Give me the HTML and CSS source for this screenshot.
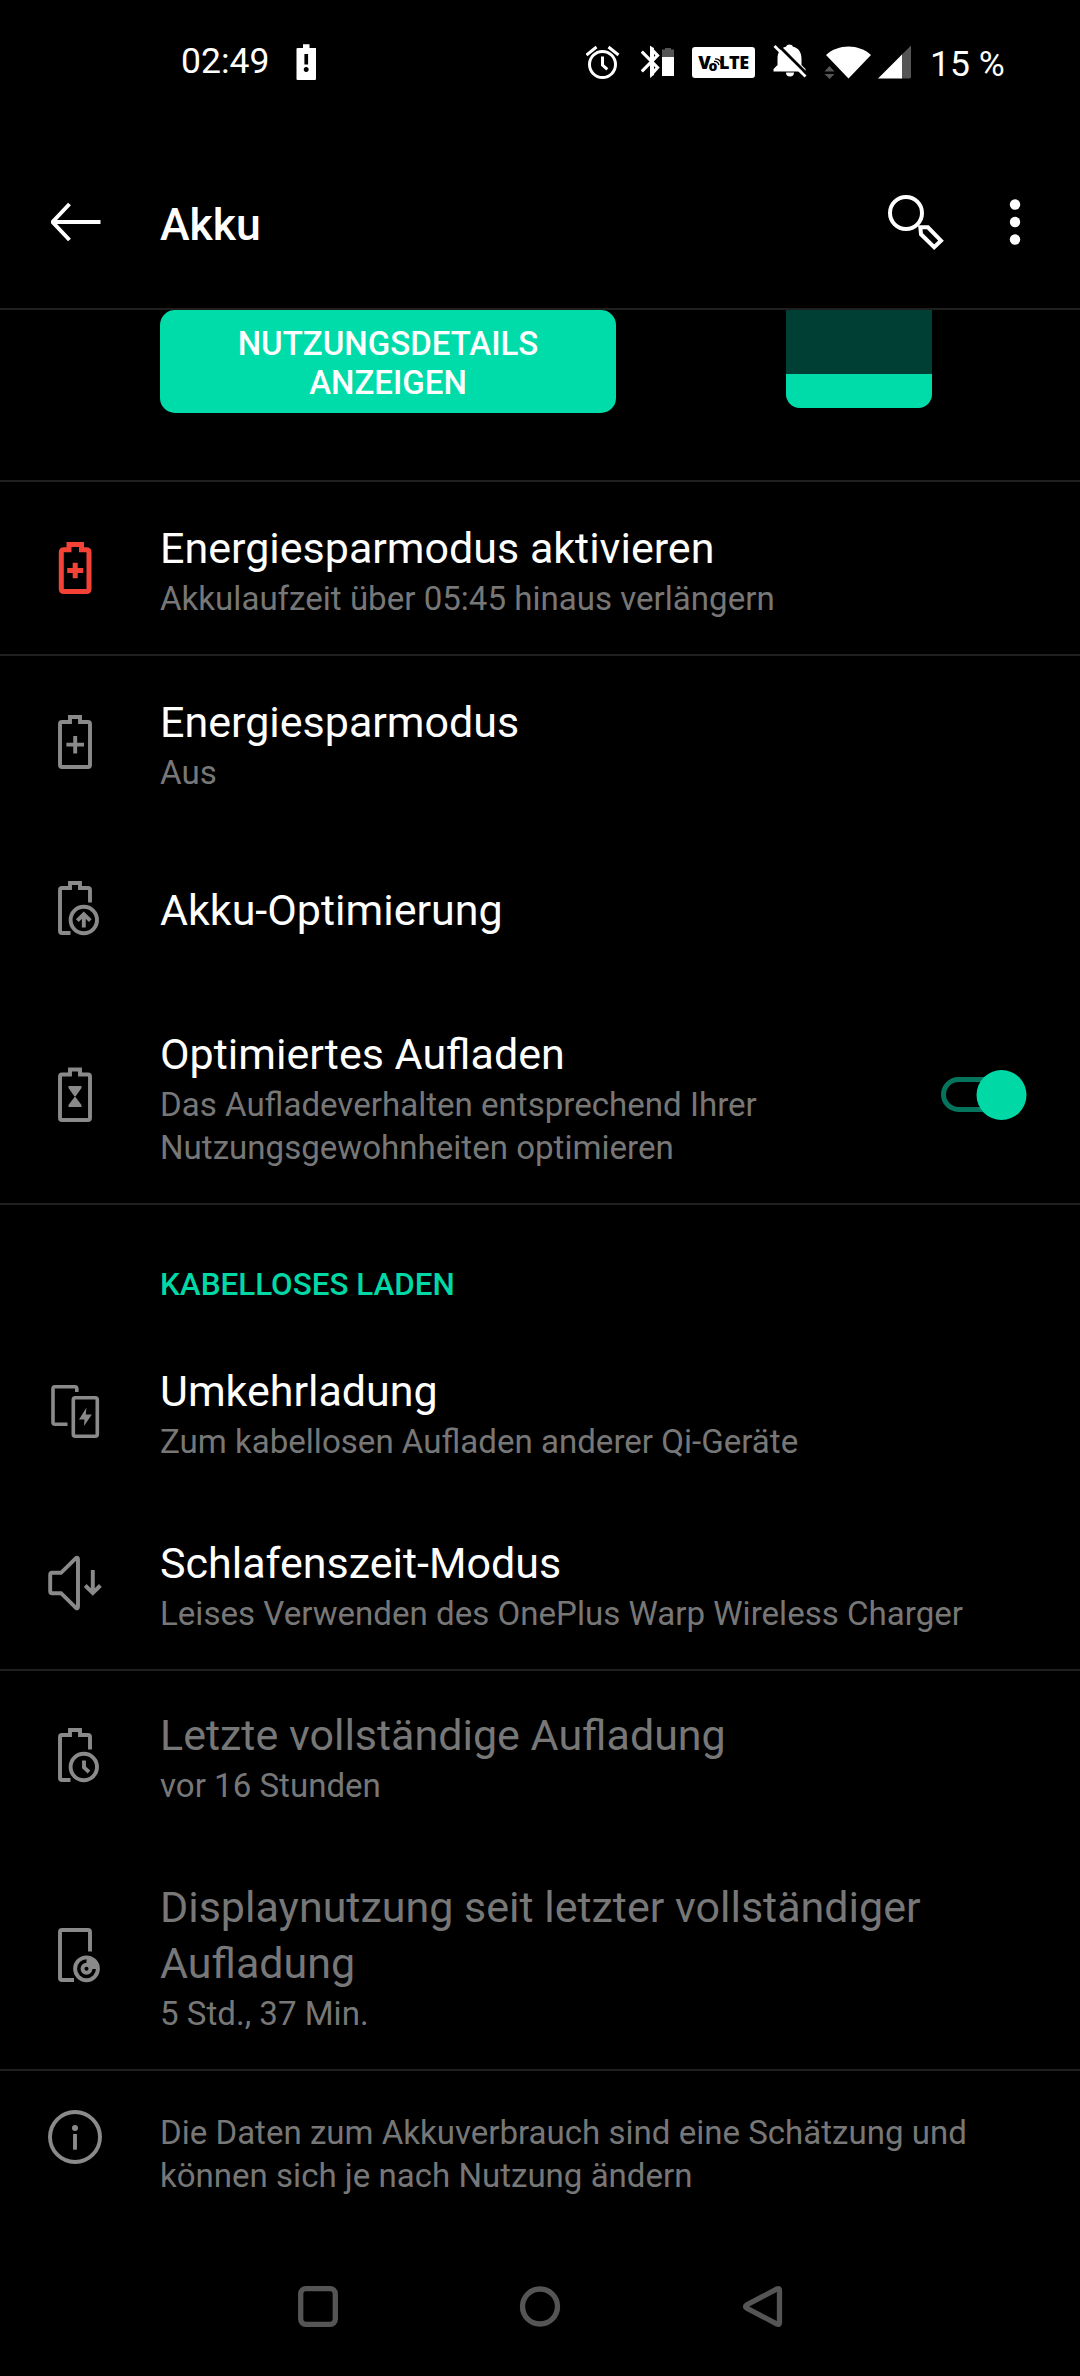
FILE: index.html
```
<!DOCTYPE html>
<html lang="de">
<head>
<meta charset="utf-8">
<title>Akku</title>
<link rel="stylesheet" href="styles.css">
</head>
<body>
<div class="screen">
  <header class="status">
    <span class="clock">02:49</span>
    <svg class="st-alert" width="20" height="44" viewBox="296 40 20 44"><path fill="#fff" fill-rule="evenodd" d="M303 44.3h6.5V48H316v31a1 1 0 0 1-1 1h-17.500a1 1 0 0 1-1-1V49a1 1 0 0 1 1-1H303ZM304.400 54v10.500h3.700V54ZM306.200 67a2.500 2.500 0 1 0 .01 0Z"/></svg>
    <div class="st-right">
      <svg width="34" height="44" viewBox="586 40 34 44" fill="none" stroke="#fff" stroke-width="3"><circle cx="602.500" cy="64.500" r="13"/><path d="M602.500 56.500V65l4.800 4.300M586.500 55l10-8M618.500 55l-10-8"/></svg>
      <svg class="st-bt" width="34" height="44" viewBox="641 40 34 44"><path fill="none" stroke="#fff" stroke-width="3.200" d="M641.800 51.500 657.500 67.500 651.800 74V49.500L657.500 55.500 641.800 71.500"/><path fill="#fff" d="M650 46l4 2v27l-4 2Z"/><path fill="#555" d="M662 57v-7.500h3V48h6v1.500h3V57Z"/><path fill="#fff" d="M662 57h12v19h-12Z"/></svg>
      <span class="volte"><span>V</span><span class="volte-o">o<svg width="9" height="9" viewBox="0 0 9 9" fill="none" stroke="#000" stroke-width="1.300"><path d="M1 3.500Q4.500 3 6 7M2 .8Q7 .8 8.300 5.200"/></svg></span><span>LTE</span></span>
      <svg class="st-bell" width="34" height="44" viewBox="773 40 34 44"><path fill="#fff" d="M773.500 71.500v-2.500l4-4V59c0-7 3-11 8.500-12.300 1-3 6-3 7 0 5.500 1.300 8.500 5.300 8.500 12.300v6l4 4v2.500ZM786 72.500h8a4 4 0 0 1-8 0Z"/><path stroke="#000" stroke-width="3" d="m777 44 30 30"/><path stroke="#fff" stroke-width="2.800" d="m774.500 46 31 30.500"/></svg>
      <svg class="st-wifi" width="47" height="44" viewBox="824 40 47 44"><path fill="#fff" d="M826 55c12-11.500 33-11.500 45 0l-22.500 23.500Z"/><path fill="#555" d="m824.500 71.500 5-5.500 5 5.500ZM824.500 74h10l-5 5Z"/></svg>
      <svg class="st-signal" width="33" height="44" viewBox="878 40 33 44"><path fill="#555" d="M911 45.500V77.500l-1 1H900V56.500Z"/><path fill="#fff" d="M902 54.500v24H878Z"/></svg>
      <span class="percent">15 %</span>
    </div>
  </header>

  <div class="appbar">
    <svg class="back" width="50" height="66" viewBox="51 189 50 66" fill="none" stroke="#fff" stroke-width="4"><path d="M53 222h47.500M69.500 204 52.500 222l17 18"/></svg>
    <h1>Akku</h1>
    <svg class="search" width="56" height="66" viewBox="888 189 56 66" fill="none" stroke="#fff" stroke-width="4"><circle cx="906" cy="213" r="16"/><path d="M920.300 227.300h7.600L941 240.700l-6.800 6.500L921 234.300Z"/></svg>
    <svg width="12" height="66" viewBox="1009 189 12 66" fill="#fff"><circle cx="1015" cy="204.500" r="5.200"/><circle cx="1015" cy="222" r="5.200"/><circle cx="1015" cy="239.500" r="5.200"/></svg>
  </div>

  <main>
    <section class="group summary">
      <button class="details" type="button">NUTZUNGSDETAILS ANZEIGEN</button>
      <div class="level"><div class="level-fill"></div></div>
    </section>

    <section class="group">
      <div class="row">
        <svg class="icon warn" viewBox="0 0 66 66"><path d="M27 14.700H22q-2.700 0-2.700 2.700V54q0 2.600 2.700 2.600H44.300q2.700 0 2.700-2.600V17.400q0-2.700-2.700-2.700H39.500V9.500H27ZM25.200 35.500H41.200M33.200 27.700v15.600"/></svg>
        <div class="text"><div class="title">Energiesparmodus aktivieren</div><div class="sub">Akkulaufzeit über 05:45 hinaus verlängern</div></div>
      </div>
    </section>

    <section class="group">
      <div class="row">
        <svg class="icon" viewBox="0 0 66 66"><path d="M28 13H20q-2 0-2 2V56q0 2 2 2H46q2 0 2-2V15q0-2-2-2H38V8H28ZM24.400 35.600H42M33.200 27v17.500"/></svg>
        <div class="text"><div class="title">Energiesparmodus</div><div class="sub">Aus</div></div>
      </div>
      <div class="row single">
        <svg class="icon" viewBox="0 0 66 66"><path d="M28.500 58H20q-2 0-2-2V15q0-2 2-2H28V8H38V13H46q2 0 2 2V27.500M41.800 52.500V39M35.300 45.700l6.500-6.500 6.500 6.500"/><circle cx="41.800" cy="45" r="13.200"/></svg>
        <div class="text"><div class="title">Akku-Optimierung</div></div>
      </div>
      <div class="row charging">
        <svg class="icon" viewBox="0 0 66 66"><path d="M28 12.500H20q-2 0-2 2V56q0 2 2 2H46q2 0 2-2V14.500q0-2-2-2H38V7.500H28Z"/><path class="solid" d="M26.500 24h13v2l-6 8.500h-1l-6-8.500ZM26.500 45v-2l6-8h1l6 8v2Z"/></svg>
        <div class="text"><div class="title">Optimiertes Aufladen</div><div class="sub">Das Aufladeverhalten entsprechend Ihrer Nutzungsgewohnheiten optimieren</div></div>
        <svg class="toggle" width="86" height="50" viewBox="0 0 86 50"><rect x="2.500" y="9.500" width="70" height="30" rx="15" fill="none" stroke="#04755c" stroke-width="5"/><circle cx="60.500" cy="25" r="25" fill="#00d8a6"/></svg>
      </div>
    </section>

    <section class="group">
      <h2>KABELLOSES LADEN</h2>
      <div class="row">
        <svg class="icon thin" viewBox="0 0 66 66"><path d="M25.500 46.200H13q-2 0-2-2V10.800q0-2 2-2H32.800q2 0 2 2V14"/><rect x="31.300" y="19.800" width="24" height="38.400" rx="2"/><path class="solid" d="m44.500 29.500-7.500 12h5.500l-.5 6.500 7.800-11.500h-6Z"/></svg>
        <div class="text"><div class="title">Umkehrladung</div><div class="sub">Zum kabellosen Aufladen anderer Qi-Geräte</div></div>
      </div>
      <div class="row">
        <svg class="icon" viewBox="0 0 66 66"><path d="M10.200 22.800H19L34 8q2-1 2 1.500V56.500q0 2.500-2 1.500L19 43.200H10.200q-2 0-2-2V24.800q0-2 2-2ZM50.800 20V42M43.200 35.500l7.600 7.500 7.600-7.500"/></svg>
        <div class="text"><div class="title">Schlafenszeit-Modus</div><div class="sub">Leises Verwenden des OnePlus Warp Wireless Charger</div></div>
      </div>
    </section>

    <section class="group stats">
      <div class="row disabled">
        <svg class="icon" viewBox="0 0 66 66"><path d="M28.500 58H20q-2 0-2-2V15q0-2 2-2H28V8H38V13H46q2 0 2 2V27.500M42 38.500v7l5 4.500"/><circle cx="41.800" cy="45" r="13.200"/></svg>
        <div class="text"><div class="title">Letzte vollständige Aufladung</div><div class="sub">vor 16 Stunden</div></div>
      </div>
      <div class="row disabled">
        <svg class="icon" viewBox="0 0 66 66"><path d="M32 58H20q-2 0-2-2V10q0-2 2-2H46q2 0 2 2V29.500"/><circle cx="44.500" cy="46.800" r="11.400"/><circle cx="44.500" cy="46.800" r="4"/><path class="solid" d="M44.500 35a12 12 0 0 1 12 12h-7a5 5 0 0 0-5-5Z"/></svg>
        <div class="text"><div class="title">Displaynutzung seit letzter vollständiger Aufladung</div><div class="sub">5 Std., 37 Min.</div></div>
      </div>
    </section>

    <footer class="note">
      <svg class="icon" viewBox="0 0 66 66"><circle cx="33" cy="33" r="25"/><path d="M33 30v15.700"/><circle class="solid" cx="33" cy="24" r="3"/></svg>
      <p>Die Daten zum Akkuverbrauch sind eine Schätzung und können sich je nach Nutzung ändern</p>
    </footer>
  </main>

  <nav class="navbar">
    <svg width="44" height="44" viewBox="0 0 44 44"><rect x="4.700" y="4.700" width="34.600" height="35.600" rx="5"/></svg>
    <svg width="44" height="44" viewBox="0 0 44 44"><circle cx="22" cy="22.500" r="17.500"/></svg>
    <svg width="44" height="44" viewBox="0 0 44 44"><path d="M36 5q2.500-1 2.500 1.500V38.500q0 2.500-2.500 1.500L5.500 24q-2-1.500 0-3Z"/></svg>
  </nav>
</div>
</body>
</html>
```
FILE: styles.css
```
* { box-sizing: border-box; margin: 0; padding: 0; }

body {
  background: #000;
  color: #fff;
  font-family: Roboto, "Noto Sans", sans-serif;
}

svg { display: block; flex: none; }

.screen {
  width: 1080px;
  height: 2376px;
  display: flex;
  flex-direction: column;
  overflow: hidden;
}

/* Status bar */
.status {
  height: 124px;
  padding: 40px 75px 0 181px;
  display: flex;
  align-items: flex-start;
  font-size: 35.5px;
  line-height: 42px;
}
.clock { width: 115px; }
.st-right { margin-left: auto; display: flex; align-items: flex-start; }
.st-bt { margin-left: 21px; }
.volte {
  width: 63px;
  height: 31px;
  margin: 7px 0 0 17px;
  border-radius: 3px;
  background: #fff;
  color: #000;
  display: flex;
  justify-content: center;
  align-items: center;
  font: 800 18px/31px "Open Sans", sans-serif;
  letter-spacing: -0.4px;
}
.volte-o { display: flex; font-size: 14px; margin: 5px -3px 0 -2px; }
.volte-o svg { margin: 8px 0 0 -4px; }
.st-bell { margin-left: 18px; }
.st-wifi { margin-left: 17px; }
.st-signal { margin-left: 7px; }
.percent { margin: 3px 0 0 19px; width: 75px; white-space: nowrap; }

/* App bar */
.appbar {
  height: 186px;
  padding: 12px 59px 0 51px;
  border-bottom: 2px solid #1f1f1f;
  display: flex;
  align-items: center;
}
.appbar h1 {
  margin: 6px auto 0 59px;
  font-size: 44.6px;
  line-height: 56px;
  font-weight: 500;
}
.search { margin-right: 65px; }

/* Preference groups */
.group { border-bottom: 2px solid #1f1f1f; }

.summary {
  height: 172px;
  padding: 0 148px 0 160px;
  display: flex;
  justify-content: space-between;
  align-items: flex-start;
}
.details {
  width: 456px;
  height: 103px;
  padding: 3px 60px 0 60px;
  border: 0;
  border-radius: 15px;
  background: #00dca9;
  color: #fff;
  font: 500 33px/39px Roboto, sans-serif;
}
.level {
  width: 146px;
  height: 98px;
  border-radius: 0 0 14px 14px;
  background: #004034;
  display: flex;
  align-items: flex-end;
  overflow: hidden;
}
.level-fill { width: 100%; height: 34px; background: #00dca9; }

.row { display: flex; align-items: center; }
.text { flex: 1; margin-left: 52px; padding: 38px 60px 34px 0; }
.title { font-size: 43px; line-height: 56px; }
.sub { margin-top: 1px; font-size: 33.1px; line-height: 43px; color: #777; }
.row.single { height: 160px; }
.row.single .text { padding: 4px 60px 0 0; }
.charging .icon, .charging .toggle { margin-bottom: 2px; }
.disabled .title { color: #777; }
.stats .row:first-child { margin-top: -2px; }
.toggle { margin-right: 53px; }

.group h2 {
  height: 120px;
  padding: 61px 0 0 160px;
  font-size: 31.4px;
  line-height: 38px;
  font-weight: 500;
  color: #00d8a6;
}

/* Row icons */
.icon {
  width: 66px;
  height: 66px;
  margin-left: 42px;
  fill: none;
  stroke: #8a8a8a;
  stroke-width: 3.9px;
}
.icon.thin { stroke-width: 3.6px; }
.icon.warn { stroke: #f44336; stroke-width: 5px; }
.icon .solid { fill: #8a8a8a; stroke: none; }

.note { display: flex; align-items: flex-start; padding-top: 33px; }
.note p {
  margin: 7px 60px 0 52px;
  font-size: 33.05px;
  line-height: 43px;
  color: #777;
}

/* System navigation */
.navbar {
  margin-top: auto;
  height: 92px;
  display: flex;
  justify-content: center;
  gap: 178.5px;
}
.navbar svg { fill: none; stroke: #555; stroke-width: 5.3px; }
```
